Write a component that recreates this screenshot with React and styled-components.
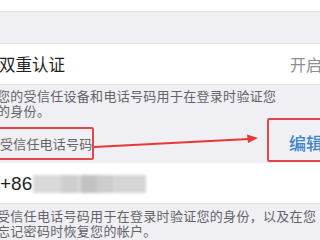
import React from 'react';
import styled, { createGlobalStyle } from 'styled-components';

const GlobalStyle = createGlobalStyle`
  html, body {
    margin: 0;
    padding: 0;
    background: #efeff4;
    overflow: hidden;
  }
`;

const Page = styled.div`
  width: 345px;
  height: 240px;
  margin-left: -3px;
  background: #efeff4;
  overflow: hidden;
  font-family: "Noto Sans CJK SC", "Noto Sans", sans-serif;
`;

const TopCell = styled.div`
  height: 11px;
  background: #fff;
  border-bottom: 1px solid #e2e2e6;
`;

const Gap = styled.div`
  height: ${(p) => p.$h}px;
`;

const Cell = styled.div`
  height: ${(p) => p.$h}px;
  background: #fff;
  border-top: 1px solid #e2e2e6;
  border-bottom: 1px solid #e2e2e6;
  display: flex;
  align-items: center;
  justify-content: space-between;
  padding: 0 20px 0 ${(p) => p.$pl || 0}px;
  box-sizing: border-box;
`;

const Title = styled.span`
  font-size: 16.5px;
  color: #1f1f1f;
`;

const Value = styled.span`
  font-size: 16px;
  color: #8e8e93;
`;

const Footer = styled.p`
  margin: 0;
  padding-top: ${(p) => p.$pt}px;
  width: ${(p) => p.$w}px;
  font-size: 13px;
  letter-spacing: 0.3px;
  line-height: 14.5px;
  color: #636368;
`;

const HeaderRow = styled.div`
  height: 45px;
  display: flex;
  align-items: flex-start;
`;

const LabelBox = styled.div`
  width: 97px;
  height: 33px;
  margin-top: 9px;
  box-sizing: border-box;
  border: 2px solid #e2484b;
  border-radius: 2px;
  padding-left: 1px;
  display: flex;
  align-items: center;
  font-size: 13px;
  letter-spacing: 0.2px;
  color: #636368;
  white-space: nowrap;
`;

const Arrow = styled.svg`
  flex: none;
  width: 173px;
  height: 45px;
`;

const EditBox = styled.div`
  flex: 1;
  height: 44px;
  box-sizing: border-box;
  border: 2px solid #e2484b;
  border-radius: 2px;
  padding: 4px 0 0 20px;
  display: flex;
  align-items: center;
  font-size: 17px;
  font-weight: 500;
  color: #3d84c8;
  white-space: nowrap;
`;

const PhoneCell = styled.div`
  height: 41px;
  background: #fff;
  border-bottom: 1px solid #e2e2e6;
  display: flex;
  align-items: center;
  padding-left: 3px;
  box-sizing: border-box;
`;

const Code = styled.span`
  font-family: "Liberation Sans", Arial, sans-serif;
  font-size: 19px;
  color: #1f1f1f;
  margin-top: 2px;
`;

const Blur = styled.div`
  display: flex;
  height: 18px;
  margin: 2px 0 0 1px;
  filter: blur(1.5px);
`;

const Pixel = styled.div`
  width: ${(p) => p.$w}px;
  background: ${(p) => p.$c};
`;

const mosaic = [
  [28, '#d8d8d8'],
  [16, '#cecece'],
  [4, '#d6d6d6'],
  [16, '#c2c2c2'],
  [16, '#cdcdcd'],
  [4, '#d6d6d6'],
  [29, '#d5d5d5'],
];

export default function App() {
  return (
    <>
      <GlobalStyle />
      <Page>
        <TopCell />
        <Gap $h={31} />
        <Cell $h={42} $pl={2}>
          <Title>双重认证</Title>
          <Value>开启</Value>
        </Cell>
        <Footer $pt={4} $w={285}>
          您的受信任设备和电话号码用于在登录时验证您的身份。
        </Footer>
        <HeaderRow>
          <LabelBox>受信任电话号码</LabelBox>
          <Arrow viewBox="0 0 173 45">
            <line x1="0" y1="29" x2="155" y2="21" stroke="#e53935" strokeWidth="2" />
            <polygon points="164,20 153,16.5 154,25" fill="#e53935" />
          </Arrow>
          <EditBox>编辑</EditBox>
        </HeaderRow>
        <PhoneCell>
          <Code>+86</Code>
          <Blur>
            {mosaic.map(([w, c], i) => (
              <Pixel key={i} $w={w} $c={c} />
            ))}
          </Blur>
        </PhoneCell>
        <Footer $pt={5} $w={325}>
          受信任电话号码用于在登录时验证您的身份，以及在您忘记密码时恢复您的帐户。
        </Footer>
      </Page>
    </>
  );
}
